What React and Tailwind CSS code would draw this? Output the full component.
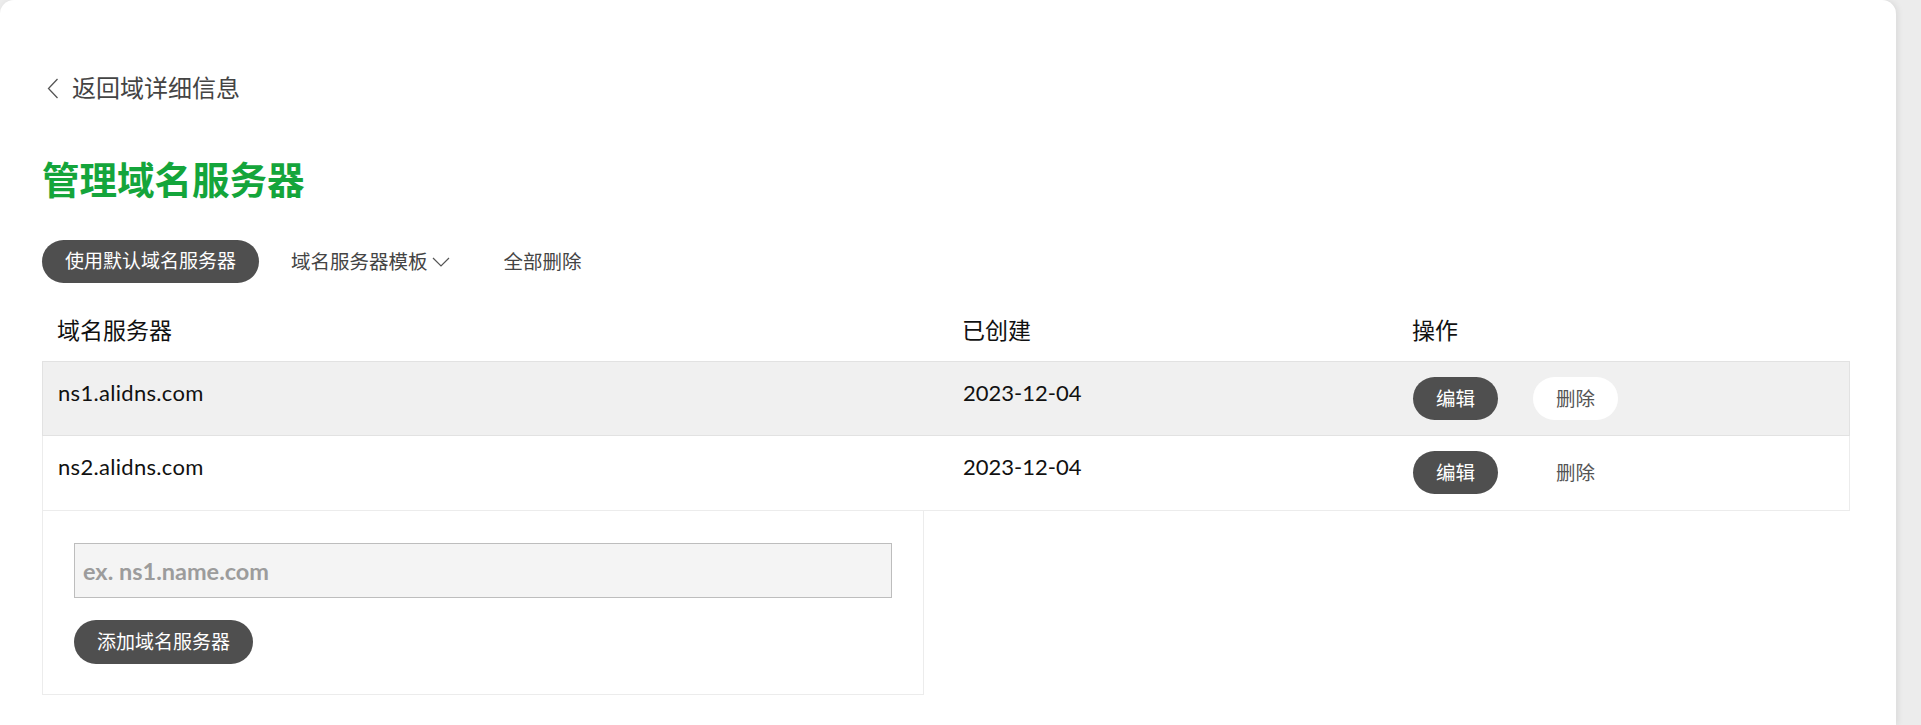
import { useState } from 'react'

const FONT = { fontFamily: 'Lato, "Noto Sans CJK SC", sans-serif' }

const servers = [
  { name: 'ns1.alidns.com', created: '2023-12-04' },
  { name: 'ns2.alidns.com', created: '2023-12-04' },
]

export default function App() {
  const [value, setValue] = useState('')

  return (
    <div className="min-h-screen h-[725px] bg-[#ececec] flex overflow-hidden" style={FONT}>
      <div className="w-[1896px] h-[725px] bg-white rounded-t-[14px] shadow-[2px_0_6px_rgba(0,0,0,0.08)] pl-[42px] pr-[46px] pt-[76px]">

        {/* Back link */}
        <a className="flex items-center h-[24px] text-[24px] leading-[24px] text-[#444] cursor-pointer">
          <svg className="w-[12px] h-[21px] ml-[5px] mr-[13px]" viewBox="0 0 12 21" fill="none" stroke="#555" strokeWidth="1.3">
            <polyline points="10.5,1 1.5,10.5 10.5,20" />
          </svg>
          返回域详细信息
        </a>

        {/* Title */}
        <h1 className="mt-[58px] text-[37.5px] leading-[44px] font-bold text-[#14a53b]">管理域名服务器</h1>

        {/* Toolbar */}
        <div className="mt-[38px] flex items-center h-[43px]">
          <button className="h-[43px] px-[23px] rounded-full bg-[#4f4f4f] text-white text-[19px]">使用默认域名服务器</button>
          <button className="ml-[32px] flex items-center text-[19.5px] text-[#444]">
            域名服务器模板
            <svg className="w-[18px] h-[10px] ml-[4px]" viewBox="0 0 18 10" fill="none" stroke="#555" strokeWidth="1.2">
              <polyline points="1,1 9,9 17,1" />
            </svg>
          </button>
          <button className="ml-[54px] text-[19.5px] text-[#444]">全部删除</button>
        </div>

        {/* Table */}
        <div className="grid grid-cols-[905px_450px_1fr] pl-[15px] pt-[32px] pb-[16px] text-[23px] leading-[30px] text-[#111]">
          <div>域名服务器</div>
          <div>已创建</div>
          <div>操作</div>
        </div>

        {servers.map((s, i) => (
          <div
            key={s.name}
            className={`grid grid-cols-[905px_450px_1fr] pl-[15px] h-[75px] border-x border-b text-[22px] text-[#111] ${
              i === 0 ? 'bg-[#f0f0f0] border-t border-[#e2e2e2]' : 'bg-white border-[#ececec]'
            }`}
          >
            <div className="pt-[17px] leading-[28px] tracking-[0.3px]">{s.name}</div>
            <div className="pt-[17px] leading-[28px]">{s.created}</div>
            <div className="pt-[15px] flex items-start gap-[35px]">
              <button className="h-[43px] w-[85px] rounded-full bg-[#4f4f4f] text-white text-[19.5px]">编辑</button>
              <button className={`h-[43px] w-[85px] rounded-full text-[19.5px] text-[#555] ${i === 0 ? 'bg-white' : ''}`}>删除</button>
            </div>
          </div>
        ))}

        {/* Add server */}
        <div className="w-[882px] border-x border-b border-[#ececec] pt-[32px] pb-[30px] pl-[31px] pr-[31px]">
          <input
            value={value}
            onChange={e => setValue(e.target.value)}
            placeholder="ex. ns1.name.com"
            className="w-full h-[55px] bg-[#f4f4f4] border border-[#bdbdbd] px-[8px] text-[23.5px] font-bold text-[#333] placeholder:text-[#9c9c9c] outline-none"
          />
          <button className="mt-[22px] h-[44px] px-[23px] rounded-full bg-[#4f4f4f] text-white text-[19px]">添加域名服务器</button>
        </div>
      </div>
    </div>
  )
}
